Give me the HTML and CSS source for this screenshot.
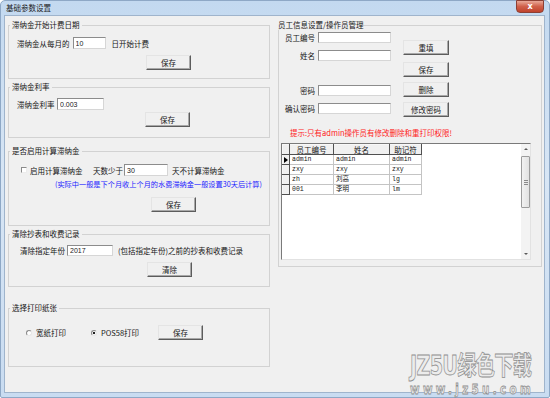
FILE: index.html
```html
<!DOCTYPE html>
<html lang="zh-CN">
<head>
  <meta charset="UTF-8">
  <title>基础参数设置</title>
  <link rel="stylesheet" href="styles.css">
</head>
<body>

  <div class="window">
    <div class="titlebar">
      <span class="title">基础参数设置</span>
      <button type="button" class="close-btn">x</button>
    </div>

    <div class="client">
      <div class="col-left">

        <fieldset class="group group-day">
          <legend>滞纳金开始计费日期</legend>
          <div class="row row-day">
            <label for="day">滞纳金从每月的</label>
            <input type="text" id="day" class="text-in in-day" value="10">
            <span class="after-day">日开始计费</span>
          </div>
          <div class="btn-row"><button type="button" class="btn btn-day">保存</button></div>
        </fieldset>

        <fieldset class="group group-rate">
          <legend>滞纳金利率</legend>
          <div class="row row-rate">
            <label for="rate">滞纳金利率</label>
            <input type="text" id="rate" class="text-in in-rate" value="0.003">
          </div>
          <div class="btn-row"><button type="button" class="btn btn-rate">保存</button></div>
        </fieldset>

        <fieldset class="group group-enable">
          <legend>是否启用计算滞纳金</legend>
          <div class="row row-enable">
            <label class="check-opt"><input type="checkbox" class="check"> 启用计算滞纳金</label>
            <label for="days">天数少于</label>
            <input type="text" id="days" class="text-in in-days" value="30">
            <span class="after-days">天不计算滞纳金</span>
          </div>
          <p class="note">(实际中一般是下个月收上个月的水费滞纳金一般设置30天后计算)</p>
          <div class="btn-row"><button type="button" class="btn btn-enable">保存</button></div>
        </fieldset>

        <fieldset class="group group-clear">
          <legend>清除抄表和收费记录</legend>
          <div class="row row-clear">
            <label for="year">清除指定年份</label>
            <input type="text" id="year" class="text-in in-year" value="2017">
            <span class="after-year">(包括指定年份)之前的抄表和收费记录</span>
          </div>
          <div class="btn-row"><button type="button" class="btn btn-clear">清除</button></div>
        </fieldset>

        <fieldset class="group group-print">
          <legend>选择打印纸张</legend>
          <div class="row row-print">
            <label class="radio-opt opt-wide"><input type="radio" name="paper" class="radio"> 宽纸打印</label>
            <label class="radio-opt opt-pos"><input type="radio" name="paper" class="radio" checked> POS58打印</label>
            <button type="button" class="btn">保存</button>
          </div>
        </fieldset>

      </div>

      <div class="col-right">
        <fieldset class="group group-staff">
          <legend>员工信息设置/操作员管理</legend>

          <div class="staff-top">
            <div class="staff-fields">
              <div class="field"><label for="code">员工编号</label><input type="text" id="code" class="text-in"></div>
              <div class="field"><label for="name">姓名</label><input type="text" id="name" class="text-in"></div>
              <div class="field field-pass"><label for="pass">密码</label><input type="password" id="pass" class="text-in"></div>
              <div class="field"><label for="pass2">确认密码</label><input type="password" id="pass2" class="text-in"></div>
            </div>
            <div class="staff-buttons">
              <button type="button" class="btn btn-staff">重填</button>
              <button type="button" class="btn btn-staff">保存</button>
              <button type="button" class="btn btn-staff">删除</button>
              <button type="button" class="btn btn-staff">修改密码</button>
            </div>
          </div>

          <p class="hint">提示:只有admin操作员有修改删除和重打印权限!</p>

          <div class="grid">
            <table class="grid-table">
              <colgroup>
                <col class="c-ind"><col class="c-code"><col class="c-name"><col class="c-memo">
              </colgroup>
              <tr>
                <th class="ind"></th><th>员工编号</th><th>姓名</th><th>助记符</th>
              </tr>
              <tr>
                <td class="ind"><span class="pointer"></span></td><td>admin</td><td>admin</td><td>admin</td>
              </tr>
              <tr>
                <td class="ind"></td><td>zxy</td><td>zxy</td><td>zxy</td>
              </tr>
              <tr>
                <td class="ind"></td><td>zh</td><td>刘高</td><td>lg</td>
              </tr>
              <tr>
                <td class="ind"></td><td>001</td><td>李明</td><td>lm</td>
              </tr>
            </table>

            <div class="scrollbar">
              <div class="arrow"><span class="tri-up"></span></div>
              <div class="track">
                <div class="thumb"><span class="grip"></span></div>
              </div>
              <div class="arrow"><span class="tri-down"></span></div>
            </div>
          </div>
        </fieldset>
      </div>
    </div>

    <div class="watermark">
      <div class="wm-logo">JZ5U绿色下载</div>
      <div class="wm-url">www.jz5u.com</div>
    </div>
  </div>

</body>
</html>
```

FILE: styles.css
```css
* {
  margin: 0;
  padding: 0;
  box-sizing: border-box;
}

body {
  font-family: "Noto Sans CJK SC", "Liberation Sans", sans-serif;
  font-size: 7.5px;
  color: #161616;
  background-color: #fff;
  width: 550px;
  height: 398px;
  overflow: hidden;
}

/* window frame */

.window {
  position: relative;
  width: 550px;
  height: 398px;
  display: flex;
  flex-direction: column;
  background: linear-gradient(to bottom, #c3d9f0, #d8e6f5 45%, #c9dcf1);
  border: 1px solid #8ea8c6;
  border-radius: 5px 5px 2px 2px;
}

.titlebar {
  height: 14px;
  display: flex;
  justify-content: space-between;
  align-items: flex-start;
  padding-left: 5px;
}

.title {
  line-height: 14px;
  color: #1c1c1c;
}

.close-btn {
  width: 28px;
  height: 13px;
  margin-top: -1px;
  margin-right: 5px;
  border: 1px solid #8d4034;
  border-radius: 0 0 4px 4px;
  background: linear-gradient(to bottom, #e9a999, #d0604a 50%, #c0432d);
  color: #fff;
  font-family: "DejaVu Sans", sans-serif;
  font-size: 8px;
  font-weight: bold;
  line-height: 10px;
}

.client {
  flex: 1;
  margin: 0 4px 4px 3px;
  background-color: #f0f0f0;
  border: 1px solid #9fb4cc;
  display: flex;
  gap: 8px;
  padding: 4px 2px 0 3px;
}

.col-left {
  width: 262px;
  display: flex;
  flex-direction: column;
}

.col-right {
  width: 264px;
}

/* group boxes */

.group {
  border: 1px solid #d2d2d2;
  min-width: 0;
}

.group legend {
  margin-left: 1px;
  padding: 0 2px;
  line-height: 10px;
}

.group-day {
  padding: 7px 0 8px 0;
}

.group-rate {
  margin-top: 3px;
  padding: 6px 0 10px 0;
}

.group-enable {
  margin-top: 8px;
  padding: 8px 0 13px 0;
}

.group-clear {
  margin-top: 3px;
  padding: 6px 0 9px 0;
}

.group-print {
  margin-top: 16px;
  padding: 12px 0 26px 0;
}

.row {
  display: flex;
  align-items: center;
  height: 12px;
  padding-left: 8px;
}

.btn-row {
  display: flex;
}

.text-in {
  height: 12px;
  border: 1px solid;
  border-color: #8c8c8c #d6d6d6 #d6d6d6 #8c8c8c;
  background-color: #fff;
  font-family: "Liberation Sans", sans-serif;
  font-size: 7px;
  color: #222;
  padding: 0 2px;
  outline: none;
}

.btn {
  width: 45px;
  height: 15px;
  background-color: #f0f0f0;
  border: 1px solid;
  border-color: #e4e4e4 #5c5c5c #5c5c5c #e4e4e4;
  box-shadow: inset -1px -1px 0 #a8a8a8;
  font-family: inherit;
  font-size: 7.5px;
  color: #161616;
}

/* group 1 */

.in-day {
  width: 33px;
  margin-left: 3px;
}

.after-day {
  margin-left: 6px;
}

.btn-day {
  margin: 6px 0 0 137px;
}

/* group 2 */

.in-rate {
  width: 47px;
  margin-left: 2.5px;
}

.btn-rate {
  margin: 2px 0 0 136px;
}

/* group 3 */

.row-enable {
  padding-left: 12px;
}

.check-opt {
  width: 72px;
  display: flex;
  align-items: center;
  gap: 3px;
}

.check {
  appearance: none;
  width: 6px;
  height: 6px;
  border: 1px solid;
  border-color: #8a8a8a #ececec #ececec #8a8a8a;
  background-color: #fff;
}

.in-days {
  width: 44px;
  margin-left: 1px;
}

.after-days {
  margin-left: 4px;
}

.note {
  margin: 4px 0 0 46px;
  font-size: 7.2px;
  line-height: 8px;
  color: #1a1aff;
  white-space: nowrap;
}

.btn-enable {
  margin: 9px 0 0 142px;
}

/* group 4 */

.row-clear {
  height: 11px;
  padding-left: 11px;
}

.in-year {
  width: 46px;
  height: 11px;
  margin-left: 2px;
}

.after-year {
  margin-left: 5px;
}

.btn-clear {
  margin: 6px 0 0 138px;
}

/* group 5 */

.row-print {
  height: 15px;
  padding-left: 17px;
}

.radio-opt {
  display: flex;
  align-items: center;
  gap: 4px;
}

.opt-wide {
  width: 65px;
}

.opt-pos {
  width: 67px;
}

.radio {
  appearance: none;
  width: 6px;
  height: 6px;
  border-radius: 50%;
  border: 1px solid;
  border-color: #8a8a8a #e6e6e6 #e6e6e6 #8a8a8a;
  background-color: #fff;
}

.radio:checked {
  background: radial-gradient(circle, #202020 0 1.2px, #fff 1.6px);
}

/* staff group */

.group-staff {
  padding: 0 0 6px 0;
}

.group-staff legend {
  margin-left: -1px;
  padding: 0;
}

.staff-top {
  display: flex;
}

.staff-fields {
  padding-top: 2px;
}

.field {
  display: flex;
  align-items: center;
  height: 11px;
}

.field + .field {
  margin-top: 7px;
}

.field + .field-pass {
  margin-top: 24px;
}

.field label {
  width: 36px;
  text-align: right;
  margin-right: 3px;
}

.field .text-in {
  width: 73px;
  height: 11px;
}

.staff-buttons {
  display: flex;
  flex-direction: column;
  margin-left: 12px;
  padding-top: 10px;
}

.btn-staff {
  width: 46px;
}

.btn-staff + .btn-staff {
  margin-top: 5px;
}

.btn-staff:nth-child(2) {
  margin-top: 7px;
}

.hint {
  margin: 11px 0 0 11px;
  line-height: 10px;
  color: #ff1a1a;
}

/* grid */

.grid {
  display: flex;
  width: 250px;
  height: 117px;
  margin: 5px 0 0 2px;
  background-color: #fff;
  border: 1px solid;
  border-color: #7a7a7a #e2e2e2 #e2e2e2 #7a7a7a;
}

.grid-table {
  border-collapse: collapse;
  table-layout: fixed;
  width: 139px;
  align-self: flex-start;
  font-family: "Liberation Mono", "Noto Sans CJK SC", monospace;
  font-size: 6.5px;
}

.c-ind {
  width: 7px;
}

.c-code {
  width: 44px;
}

.c-name {
  width: 56px;
}

.c-memo {
  width: 32px;
}

.grid-table th {
  height: 10px;
  font-family: "Noto Sans CJK SC", sans-serif;
  font-weight: normal;
  font-size: 7.5px;
  line-height: 8px;
  background-color: #f0f0f0;
  border: 1px solid;
  border-color: #f8f8f8 #505050 #505050 #f8f8f8;
}

.grid-table td {
  height: 10px;
  padding: 0 0 0 2px;
  line-height: 8px;
  border: 1px solid #c4c4c4;
  white-space: nowrap;
  overflow: hidden;
}

.grid-table td.ind {
  padding: 0;
  background-color: #f0f0f0;
  border-color: #f8f8f8 #505050 #505050 #f8f8f8;
}

.pointer {
  display: block;
  width: 0;
  height: 0;
  margin-left: 1px;
  border-top: 3px solid transparent;
  border-bottom: 3px solid transparent;
  border-left: 4px solid #000;
}

.scrollbar {
  margin-left: auto;
  width: 9px;
  display: flex;
  flex-direction: column;
  background-color: #f3f3f3;
}

.arrow {
  height: 10px;
  display: flex;
  align-items: center;
  justify-content: center;
}

.tri-up {
  border-left: 2px solid transparent;
  border-right: 2px solid transparent;
  border-bottom: 2px solid #5a5a5a;
}

.tri-down {
  border-left: 2px solid transparent;
  border-right: 2px solid transparent;
  border-top: 2px solid #5a5a5a;
}

.track {
  flex: 1;
}

.thumb {
  margin-top: 2px;
  height: 52px;
  border: 1px solid #9c9c9c;
  border-radius: 1px;
  background: linear-gradient(to right, #f2f2f2, #e2e2e2);
  display: flex;
  align-items: center;
  justify-content: center;
}

.grip {
  width: 4px;
  height: 5px;
  background: linear-gradient(to bottom, #8a8a8a 0 1px, transparent 1px 2px, #8a8a8a 2px 3px, transparent 3px 4px, #8a8a8a 4px 5px);
}

/* watermark */

.watermark {
  position: absolute;
  left: 409px;
  top: 352px;
  color: #ececec;
  -webkit-text-stroke: 0.8px #8e8e8e;
  font-family: "DejaVu Sans", "Noto Sans CJK SC", sans-serif;
  font-weight: bold;
  white-space: nowrap;
  pointer-events: none;
  transform: scaleX(0.74);
  transform-origin: left top;
}

.wm-logo {
  font-size: 26px;
  line-height: 27px;
  letter-spacing: -1px;
}

.wm-url {
  margin-top: 2px;
  font-size: 14px;
  line-height: 14px;
  letter-spacing: 4.5px;
}
```
